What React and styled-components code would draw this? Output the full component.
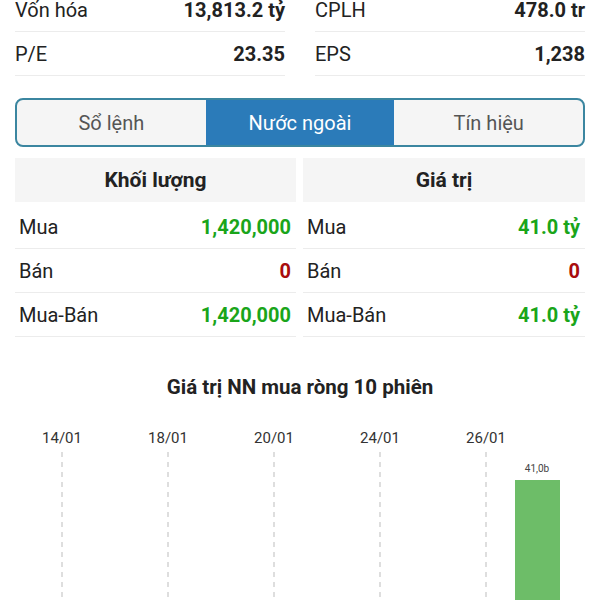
import React from 'react'
import styled, { createGlobalStyle, css } from 'styled-components'

const GlobalStyle = createGlobalStyle`
  html, body {
    margin: 0;
    padding: 0;
    background: #fff;
    font-family: Roboto, "Liberation Sans", sans-serif;
    overflow: hidden;
  }
`

const StyledPage = styled.div`
  width: 600px;
  height: 612px;
  overflow: hidden;
  margin-top: -12px;
`

const StyledStats = styled.div`
  display: grid;
  grid-template-columns: 270px 270px;
  column-gap: 30px;
  padding: 0 15px;
`

const StyledStatRow = styled.div`
  display: flex;
  justify-content: space-between;
  align-items: center;
  height: 43px;
  border-bottom: 1px solid #ececec;
  font-size: 20px;
  color: #222;
`

const StyledValue = styled.span`
  font-weight: bold;
  color: ${props => props.color || '#222'};
`

const StyledTabs = styled.div`
  display: flex;
  margin: 22px 15px 0;
  height: 45px;
  border: 2px solid #3b86a0;
  border-radius: 8px;
  overflow: hidden;
  background: #f5f5f5;
`

const StyledTab = styled.div`
  flex: 1;
  display: flex;
  align-items: center;
  justify-content: center;
  font-size: 20px;
  color: #555;

  ${props =>
    props.active &&
    css`
      background: #2b7bb9;
      color: #fff;
    `};
`

const StyledTables = styled.div`
  display: grid;
  grid-template-columns: 281px 282px;
  column-gap: 7px;
  padding: 0 15px;
  margin-top: 11px;
`

const StyledHeader = styled.div`
  height: 44px;
  margin-bottom: 3px;
  display: flex;
  align-items: center;
  justify-content: center;
  background: #f5f5f5;
  font-size: 21px;
  font-weight: bold;
  color: #222;
`

const StyledRow = styled(StyledStatRow)`
  padding: 0 5px 0 4px;
  height: 43px;
`

const StyledTitle = styled.div`
  margin-top: 38px;
  text-align: center;
  font-size: 20.5px;
  line-height: 24px;
  font-weight: bold;
  color: #222;
`

const StyledChart = styled.svg`
  display: block;
  margin-top: 10px;
`

const GREEN = '#1aa51a'
const RED = '#a80d0d'

const stats = [
  ['Vốn hóa', '13,813.2 tỷ'],
  ['CPLH', '478.0 tr'],
  ['P/E', '23.35'],
  ['EPS', '1,238']
]

const volume = [
  ['Mua', '1,420,000', GREEN],
  ['Bán', '0', RED],
  ['Mua-Bán', '1,420,000', GREEN]
]

const value = [
  ['Mua', '41.0 tỷ', GREEN],
  ['Bán', '0', RED],
  ['Mua-Bán', '41.0 tỷ', GREEN]
]

const dates = ['14/01', '18/01', '20/01', '24/01', '26/01']

const Table = ({ title, rows }) => (
  <div>
    <StyledHeader>{title}</StyledHeader>
    {rows.map(([label, val, color]) => (
      <StyledRow key={label}>
        <span>{label}</span>
        <StyledValue color={color}>{val}</StyledValue>
      </StyledRow>
    ))}
  </div>
)

const App = () => (
  <StyledPage>
    <GlobalStyle />
    <StyledStats>
      {stats.map(([label, val]) => (
        <StyledStatRow key={label}>
          <span>{label}</span>
          <StyledValue>{val}</StyledValue>
        </StyledStatRow>
      ))}
    </StyledStats>
    <StyledTabs>
      <StyledTab>Sổ lệnh</StyledTab>
      <StyledTab active>Nước ngoài</StyledTab>
      <StyledTab>Tín hiệu</StyledTab>
    </StyledTabs>
    <StyledTables>
      <Table title="Khối lượng" rows={volume} />
      <Table title="Giá trị" rows={value} />
    </StyledTables>
    <StyledTitle>Giá trị NN mua ròng 10 phiên</StyledTitle>
    <StyledChart width="600" height="200" viewBox="0 0 600 200">
      {dates.map((d, i) => {
        const x = 62 + i * 106
        return (
          <g key={d}>
            <text
              x={x}
              y="34"
              textAnchor="middle"
              fontSize="15"
              fill="#333"
              fontFamily="Roboto, sans-serif"
            >
              {d}
            </text>
            <line
              x1={x}
              y1="43"
              x2={x}
              y2="200"
              stroke="#bdbdbd"
              strokeWidth="1"
              strokeDasharray="5 5"
            />
          </g>
        )
      })}
      <text
        x="537"
        y="63"
        textAnchor="middle"
        fontSize="10"
        fill="#444"
        fontFamily="Roboto, sans-serif"
      >
        41,0b
      </text>
      <rect x="515" y="71" width="45" height="129" fill="#6dbd68" />
    </StyledChart>
  </StyledPage>
)

export default App
